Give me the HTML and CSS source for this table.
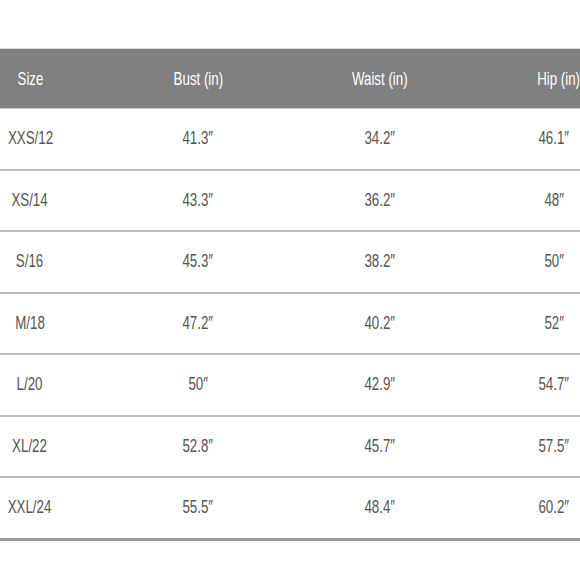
FILE: index.html
```html
<!DOCTYPE html>
<html lang="en">
<head>
<meta charset="utf-8">
<title>Size Chart</title>
<link rel="stylesheet" href="styles.css">
</head>
<body>
<div class="chart">
  <div class="row head">
    <div class="cell"><span>Size</span></div>
    <div class="cell"><span>Bust (in)</span></div>
    <div class="cell"><span>Waist (in)</span></div>
    <div class="cell"><span>Hip (in)</span></div>
  </div>
  <div class="row"><div class="cell"><span>XXS/12</span></div><div class="cell"><span>41.3″</span></div><div class="cell"><span>34.2″</span></div><div class="cell"><span>46.1″</span></div></div>
  <div class="row"><div class="cell"><span>XS/14</span></div><div class="cell"><span>43.3″</span></div><div class="cell"><span>36.2″</span></div><div class="cell"><span>48″</span></div></div>
  <div class="row"><div class="cell"><span>S/16</span></div><div class="cell"><span>45.3″</span></div><div class="cell"><span>38.2″</span></div><div class="cell"><span>50″</span></div></div>
  <div class="row"><div class="cell"><span>M/18</span></div><div class="cell"><span>47.2″</span></div><div class="cell"><span>40.2″</span></div><div class="cell"><span>52″</span></div></div>
  <div class="row"><div class="cell"><span>L/20</span></div><div class="cell"><span>50″</span></div><div class="cell"><span>42.9″</span></div><div class="cell"><span>54.7″</span></div></div>
  <div class="row"><div class="cell"><span>XL/22</span></div><div class="cell"><span>52.8″</span></div><div class="cell"><span>45.7″</span></div><div class="cell"><span>57.5″</span></div></div>
  <div class="row last"><div class="cell"><span>XXL/24</span></div><div class="cell"><span>55.5″</span></div><div class="cell"><span>48.4″</span></div><div class="cell"><span>60.2″</span></div></div>
</div>
</body>
</html>
```

FILE: styles.css
```css
html, body {
  margin: 0;
  padding: 0;
  background: #ffffff;
}

body {
  font-family: "Liberation Sans", Arial, sans-serif;
  color: #555555;
}

.chart {
  width: 580px;
  padding-top: 48px;
}

.row {
  display: grid;
  grid-template-columns: 60px 276px 88px 156px;
  height: 59.5px;
  align-items: center;
  border-bottom: 2px solid #bdbdbd;
}

.row.head {
  height: 59px;
  background: #808080;
  color: #ffffff;
  border-top: 1px solid #d6d6d6;
  border-bottom: 1px solid #cfcfcf;
}

.row.last {
  border-bottom: 3px solid #9a9a9a;
}

.cell {
  text-align: center;
  font-size: 18px;
  white-space: nowrap;
}

.cell:last-child {
  padding-left: 104px;
}

.cell span {
  display: inline-block;
  transform: scaleX(0.74);
}

.head .cell {
  font-size: 19px;
}

.head .cell span {
  transform: scaleX(0.7);
}
```
